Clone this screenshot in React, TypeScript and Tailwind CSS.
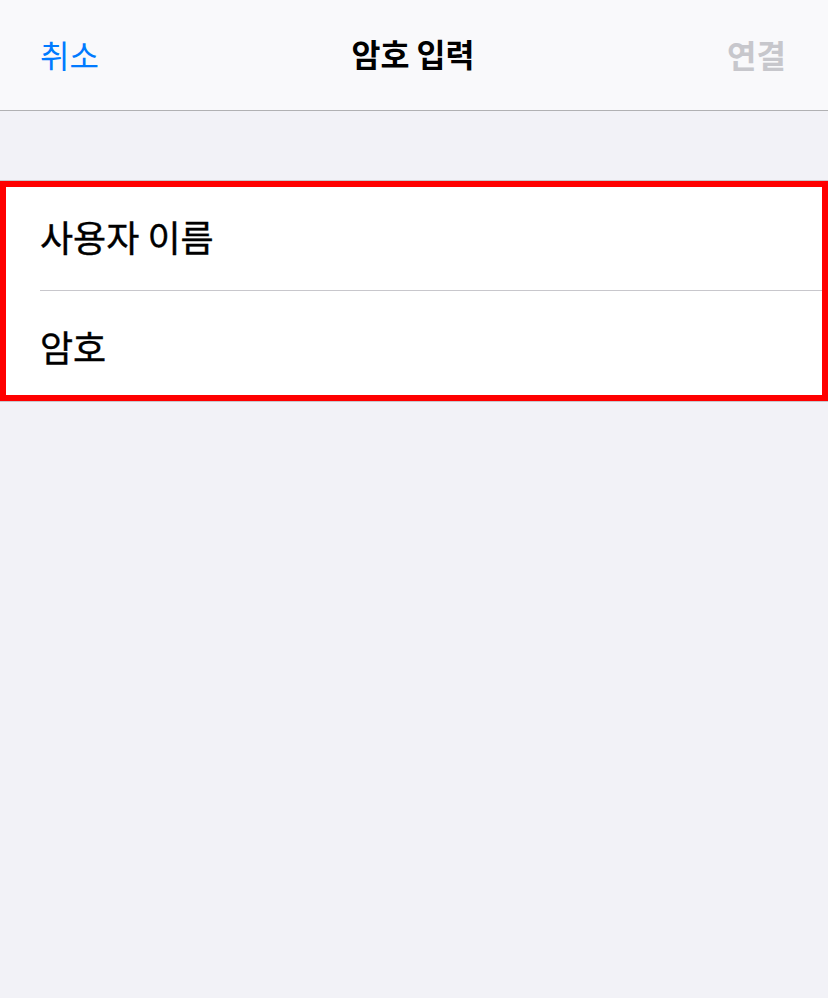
const NavBar: React.FC = () => {
  return (
    <div className="flex h-[111px] items-center justify-between border-b border-b-[#b1b1b3] bg-[#f9f9fb] pl-10 pr-[42px] pb-[3px]">
      <span className="text-[32px] text-[#007aff]">취소</span>
      <span className="text-[31.5px] font-bold text-black">암호 입력</span>
      <span className="text-[32px] font-bold text-[#c7c7cc]">연결</span>
    </div>
  );
};

const FormRow: React.FC<{ label: string; height: string }> = ({ label, height }) => {
  return (
    <div className={`flex items-center pl-10 ${height}`}>
      <span className="text-[36px] text-black [-webkit-text-stroke:0.4px_black]">{label}</span>
    </div>
  );
};

export default function App() {
  return (
    <div
      className="min-h-[998px] w-full bg-[#f2f2f7]"
      style={{ fontFamily: '"Noto Sans CJK KR", "Noto Sans", sans-serif' }}
    >
      <NavBar />
      <div className="h-[69px]" />
      {/* Credentials group */}
      <div className="relative border-y border-y-[#c8c7cc] bg-white">
        <FormRow label="사용자 이름" height="h-[109px]" />
        <div className="ml-10 h-px bg-[#c8c7cc]" />
        <FormRow label="암호" height="h-[110px]" />
        <div className="absolute inset-0 border-[6px] border-[#ff0000]" />
      </div>
    </div>
  );
}
